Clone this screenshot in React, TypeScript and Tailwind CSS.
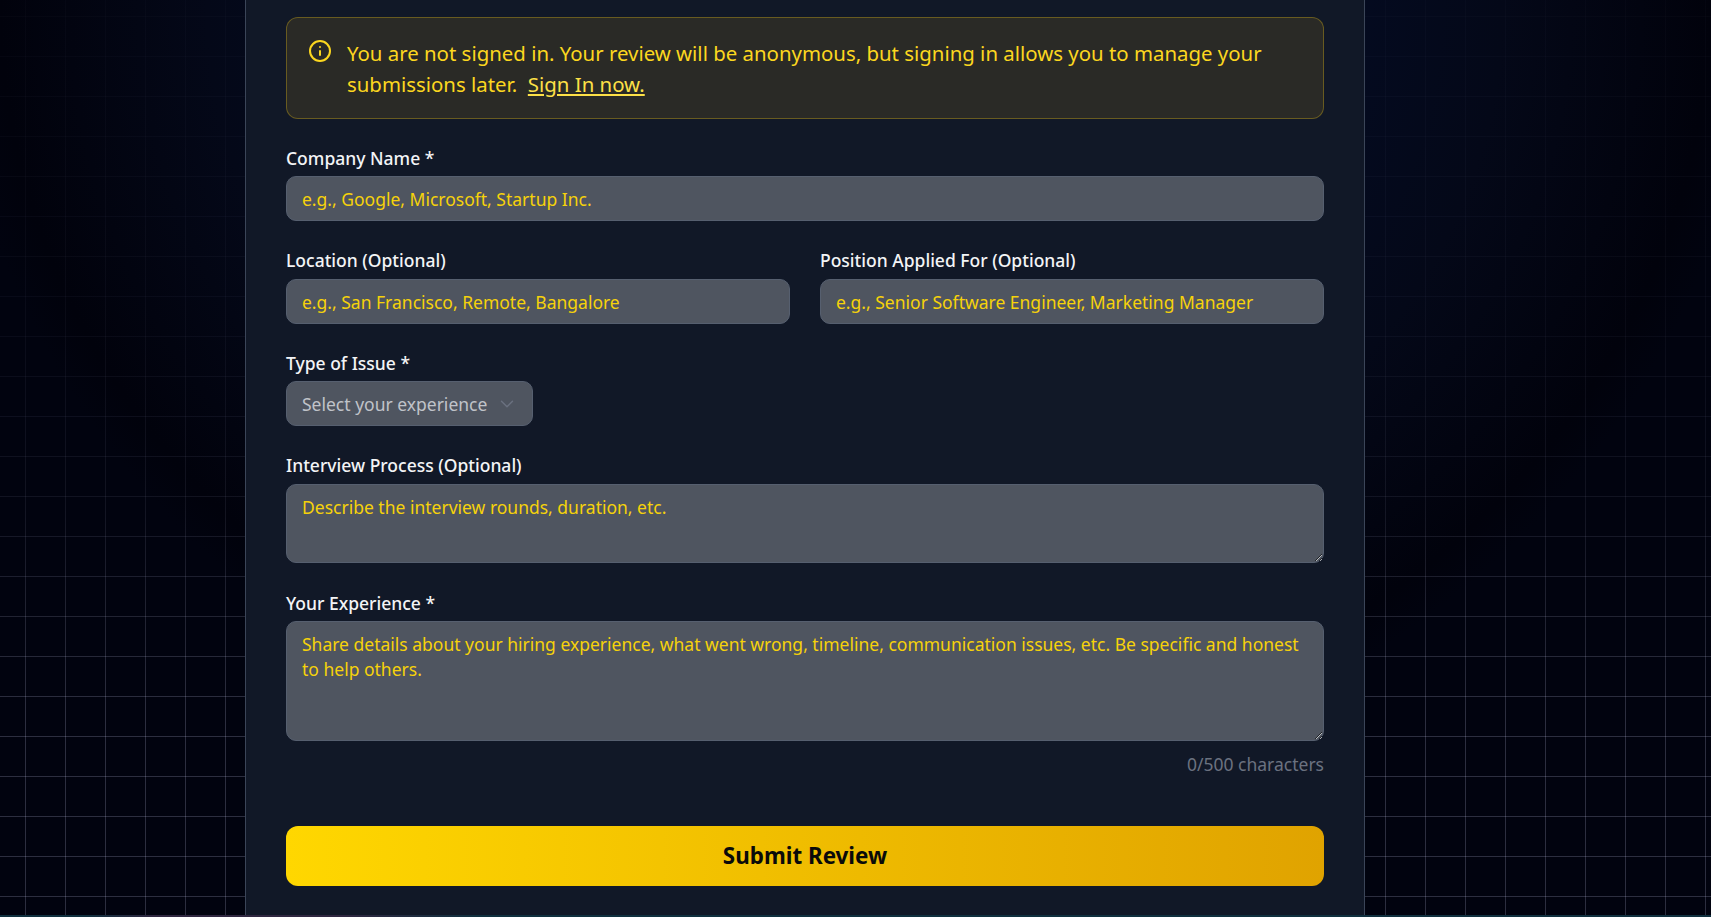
import React from "react";

const inputCls =
  "w-full h-[45px] rounded-[10px] border border-[#565f6f] bg-[#4f5560] px-[15px] pt-[1px] text-[17.5px] text-white outline-none placeholder:text-[#f6d20a]";
const selectCls =
  "w-[247px] h-[45px] rounded-[10px] border border-[#565f6f] bg-[#4f5560] pl-[15px] pr-[14px] flex items-center justify-between text-[17.5px] text-[#c0c3c9]";
const areaCls =
  "block w-full rounded-[10px] border border-[#565f6f] bg-[#4f5560] px-[15px] py-[10px] text-[17.5px] leading-[25px] text-white outline-none resize-y placeholder:text-[#f6d20a]";

function Label({ children, tight }: { children: React.ReactNode; tight?: boolean }) {
  return (
    <label className={`block h-[24px] text-[17.5px] leading-[24px] font-medium text-[#f3f4f6] ${tight ? "mb-[6px]" : "mb-[6.7px]"}`}>
      {children}
    </label>
  );
}

export default function App() {
  return (
    <div
      className="relative h-screen w-full overflow-hidden bg-[#01030f] text-white"
      style={{ fontFamily: '"Noto Sans", sans-serif' }}
    >
      <div className="absolute inset-0 bg-[radial-gradient(ellipse_900px_800px_at_855px_0px,#050c26_0%,#040b22_50%,#040818_72%,#01020c_95%,#01030f_100%)]" />
      <div className="absolute inset-0 bg-[linear-gradient(to_right,rgba(220,220,255,0.2)_1px,transparent_1px),linear-gradient(to_bottom,rgba(220,220,255,0.2)_1px,transparent_1px)] bg-[size:40px_40px] bg-[position:25px_16px] [mask-image:linear-gradient(to_bottom,rgba(0,0,0,0.1)_0%,rgba(0,0,0,0.2)_35%,rgba(0,0,0,0.4)_55%,rgba(0,0,0,0.7)_65%,rgba(0,0,0,1)_78%)]" />
      <div className="relative ml-[245px] w-[1120px] h-[915px] border-x border-[#3b4558] bg-[#111827] px-[40px] pt-[17px]">
        <div className="flex h-[102px] gap-[15px] rounded-[12px] border border-[#facc15]/30 bg-[#2a2a26] pl-[21px] pr-[24px] pt-[21px]">
          <svg width="24" height="24" viewBox="0 0 24 24" fill="none" stroke="#fcd71f" strokeWidth="2" strokeLinecap="round" strokeLinejoin="round" className="shrink-0">
            <circle cx="12" cy="12" r="10" />
            <path d="M12 16v-4" />
            <path d="M12 8h.01" />
          </svg>
          <p className="text-[20.4px] leading-[30.5px] text-[#fcd71f] -mt-[1px]">
            You are not signed in. Your review will be anonymous, but signing in allows you to manage your submissions later.&nbsp; <a className="underline text-[#fde047]">Sign In now.</a>
          </p>
        </div>

        <div className="mt-[27px]">
          <Label tight>Company Name *</Label>
          <input className={inputCls} placeholder="e.g., Google, Microsoft, Startup Inc." />
        </div>

        <div className="mt-[26.97px] grid grid-cols-2 gap-[30px]">
          <div>
            <Label>Location (Optional)</Label>
            <input className={inputCls} placeholder="e.g., San Francisco, Remote, Bangalore" />
          </div>
          <div>
            <Label>Position Applied For (Optional)</Label>
            <input className={inputCls} placeholder="e.g., Senior Software Engineer, Marketing Manager" />
          </div>
        </div>

        <div className="mt-[26.97px]">
          <Label>Type of Issue *</Label>
          <div className={selectCls}>
            <span>Select your experience</span>
            <svg width="22" height="22" viewBox="0 0 24 24" fill="none" stroke="#6b7280" strokeWidth="1.5" strokeLinecap="round" strokeLinejoin="round">
              <path d="m6 9 6 6 6-6" />
            </svg>
          </div>
        </div>

        <div className="mt-[26.97px]">
          <Label>Interview Process (Optional)</Label>
          <textarea className={`${areaCls} h-[79.5px]`} placeholder="Describe the interview rounds, duration, etc." />
        </div>

        <div className="mt-[27.27px]">
          <Label>Your Experience *</Label>
          <textarea
            className={`${areaCls} h-[119.2px]`}
            placeholder="Share details about your hiring experience, what went wrong, timeline, communication issues, etc. Be specific and honest to help others."
          />
          <p className="mt-[11.5px] text-right text-[17.5px] leading-[24px] text-[#6b7280]">0/500 characters</p>
        </div>

        <button className="mt-[49.6px] h-[60px] w-full rounded-[12px] bg-gradient-to-r from-[#ffd700] to-[#e0a300] text-[22.4px] font-bold text-[#0a0a0a]">
          Submit Review
        </button>
      </div>
      <div className="absolute bottom-0 left-0 h-[2px] w-full bg-[linear-gradient(to_right,#10303f_0%,#10303f_5%,#2f2740_9%,#2f2740_20%,#10303f_28%,#10303f_100%)]" />
    </div>
  );
}
